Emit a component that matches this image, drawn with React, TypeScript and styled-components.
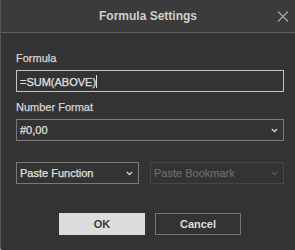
import React from 'react'
import styled, { createGlobalStyle } from 'styled-components'

const GlobalStyle = createGlobalStyle`
  html, body {
    margin: 0;
    padding: 0;
    background: #ffffff;
  }
  body {
    font-family: 'Liberation Sans', Arial, sans-serif;
  }
`

const Dialog = styled.div`
  width: 295px;
  height: 250px;
  box-sizing: border-box;
  background: #333333;
  border-left: 1px solid #555555;
  border-bottom-left-radius: 2px;
  display: flex;
  flex-direction: column;
  color: #dddddd;
`

const Header = styled.div`
  height: 32px;
  flex: none;
  background: #3b3b3b;
  border-bottom: 1px solid #5e5e5e;
  display: flex;
  align-items: center;
  justify-content: center;
  position: relative;
`

const Title = styled.div`
  font-size: 12px;
  font-weight: bold;
  color: #cfcfcf;
`

const Close = styled.button`
  position: absolute;
  right: 6px;
  top: 10px;
  width: 13px;
  height: 12px;
  padding: 0;
  border: none;
  background: transparent;
  display: flex;
  align-items: center;
  justify-content: center;
`

const Body = styled.div`
  padding: 19px 11px 0 15px;
  display: flex;
  flex-direction: column;
`

const Label = styled.div`
  font-size: 11px;
  color: #d8d8d8;
  -webkit-text-stroke: 0.25px #d8d8d8;
  height: 13px;
  line-height: 13px;
  margin-bottom: 5px;
`

const Field = styled.div<{ $active?: boolean; $disabled?: boolean; $width?: number }>`
  height: 22px;
  box-sizing: border-box;
  border: 1px solid
    ${(p) => (p.$active ? '#c4c4c4' : p.$disabled ? '#474747' : '#7a7a7a')};
  display: flex;
  align-items: center;
  padding: 0 5px 0 3px;
  font-size: 11px;
  color: ${(p) => (p.$disabled ? '#6a6a6a' : '#e0e0e0')};
  -webkit-text-stroke: 0.25px ${(p) => (p.$disabled ? '#6a6a6a' : '#e0e0e0')};
  ${(p) => (p.$width ? `width: ${p.$width}px; flex: none;` : '')}
`

const FieldText = styled.span`
  flex: 1;
  white-space: nowrap;
`

const Caret = styled.span`
  display: inline-block;
  width: 1px;
  height: 13px;
  background: #e0e0e0;
  vertical-align: -2px;
`

const Section = styled.div<{ $gap: number }>`
  display: flex;
  flex-direction: column;
  margin-bottom: ${(p) => p.$gap}px;
`

const Row = styled.div`
  display: flex;
  gap: 11px;
  margin-top: 21px;

  & > :last-child {
    flex: 1;
  }
`

const Buttons = styled.div`
  display: flex;
  justify-content: center;
  gap: 10px;
  margin-top: 29px;
`

const Button = styled.button<{ $primary?: boolean }>`
  width: 86px;
  height: 22px;
  box-sizing: border-box;
  font-family: 'Liberation Sans', Arial, sans-serif;
  font-size: 11px;
  font-weight: bold;
  border: 1px solid ${(p) => (p.$primary ? '#dcdcdc' : '#777777')};
  background: ${(p) => (p.$primary ? '#dcdcdc' : 'transparent')};
  color: ${(p) => (p.$primary ? '#3a3a3a' : '#dddddd')};
  padding: 0;
`

const Chevron: React.FC<{ color: string }> = ({ color }) => (
  <svg width="7" height="5" viewBox="0 0 7 5">
    <path d="M0.8 1 L3.5 3.6 L6.2 1" fill="none" stroke={color} strokeWidth="1.4" />
  </svg>
)

const App: React.FC = () => {
  return (
    <>
      <GlobalStyle />
      <Dialog>
        <Header>
          <Title>Formula Settings</Title>
          <Close>
            <svg width="12" height="11" viewBox="0 0 12 11">
              <path d="M1 0.5 L11 10.5 M11 0.5 L1 10.5" stroke="#a8a8a8" strokeWidth="1.2" />
            </svg>
          </Close>
        </Header>
        <Body>
          <Section $gap={9}>
            <Label>Formula</Label>
            <Field $active>
              <FieldText>
                =SUM(ABOVE)
                <Caret />
              </FieldText>
            </Field>
          </Section>
          <Section $gap={0}>
            <Label>Number Format</Label>
            <Field>
              <FieldText>#0,00</FieldText>
              <Chevron color="#cfcfcf" />
            </Field>
          </Section>
          <Row>
            <Field $width={123}>
              <FieldText>Paste Function</FieldText>
              <Chevron color="#cfcfcf" />
            </Field>
            <Field $disabled>
              <FieldText>Paste Bookmark</FieldText>
              <Chevron color="#5a5a5a" />
            </Field>
          </Row>
          <Buttons>
            <Button $primary>OK</Button>
            <Button>Cancel</Button>
          </Buttons>
        </Body>
      </Dialog>
    </>
  )
}

export default App
